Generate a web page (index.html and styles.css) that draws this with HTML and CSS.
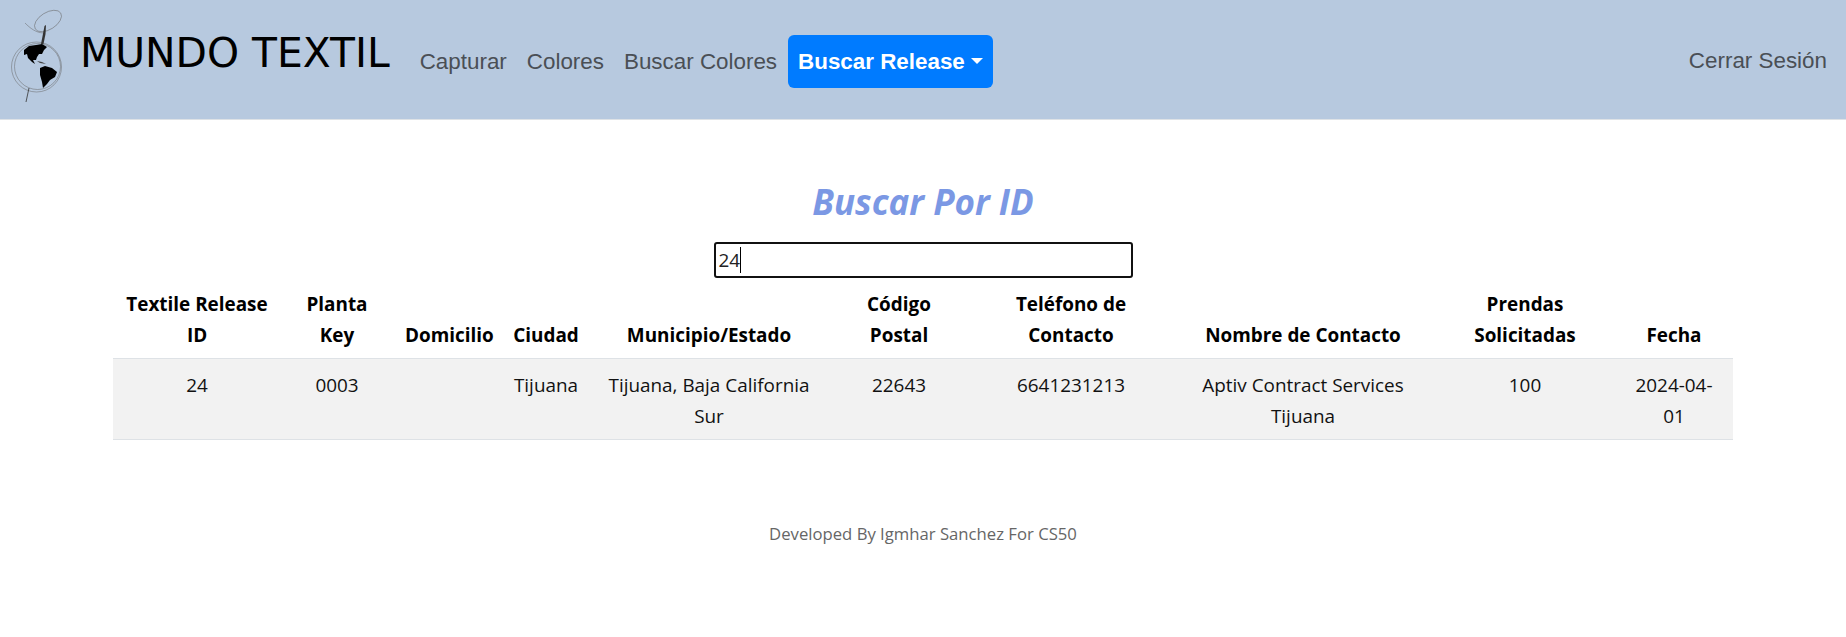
FILE: index.html
```html
<!DOCTYPE html>
<html>
<head>
  <link rel="stylesheet" href="styles.css">
  <title>Mundo Textil</title>
</head>
<body>
  <nav class="navbar">
    <a class="brand" href="#">
      <svg class="logo" viewBox="0 0 80 110" width="80" height="110">
        <g fill="none" stroke="#666" stroke-width="0.5">
          <circle cx="36.5" cy="67" r="25"/>
          <circle cx="37.5" cy="66.5" r="23"/>
          <ellipse cx="48" cy="21" rx="15" ry="8.5" transform="rotate(-32 48 21)"/>
          <path d="M25 23 C30 28 36 33 44 33"/>
        </g>
        <path d="M41 44 L44.5 26 L46 25 L45.5 34 L43.5 44 Z" fill="#333"/>
        <path d="M29 88 L26 102" fill="none" stroke="#333" stroke-width="0.8"/>
        <path d="M24 50 L29 46 L36 45 L42 44 L47 47 L44 50 L42 54 L39 54 L37 57 L36 60 L33 60 L35 64 L32 62 L28 58 L27 54 L24 55 Z" fill="#000"/>
        <path d="M40 68 L45 66 L52 68 L57 72 L55 77 L50 80 L47 84 L43 88 L42 82 L40 75 Z" fill="#000"/>
        <path d="M37 61 L42 62 L46 64 L40 63 Z" fill="#444"/>
      </svg>
      <span class="brand-name">MUNDO TEXTIL</span>
    </a>
    <ul class="nav-links">
      <li><a href="#">Capturar</a></li>
      <li><a href="#">Colores</a></li>
      <li><a href="#">Buscar Colores</a></li>
      <li class="release"><a class="active" href="#">Buscar Release<span class="caret"></span></a></li>
    </ul>
    <a class="logout" href="#">Cerrar Sesión</a>
  </nav>

  <main class="content">
    <h2 class="title">Buscar Por ID</h2>
    <div class="search">
      <div class="search-box">24<span class="cursor"></span></div>
    </div>
    <table class="results">
      <colgroup>
        <col class="c1"><col class="c2"><col class="c3"><col class="c4"><col class="c5">
        <col class="c6"><col class="c7"><col class="c8"><col class="c9"><col class="c10">
      </colgroup>
      <thead>
        <tr>
          <th>Textile Release ID</th>
          <th>Planta Key</th>
          <th>Domicilio</th>
          <th>Ciudad</th>
          <th>Municipio/Estado</th>
          <th>Código Postal</th>
          <th>Teléfono de Contacto</th>
          <th>Nombre de Contacto</th>
          <th>Prendas Solicitadas</th>
          <th>Fecha</th>
        </tr>
      </thead>
      <tbody>
        <tr>
          <td>24</td>
          <td>0003</td>
          <td></td>
          <td>Tijuana</td>
          <td>Tijuana, Baja California Sur</td>
          <td>22643</td>
          <td>6641231213</td>
          <td>Aptiv Contract Services Tijuana</td>
          <td>100</td>
          <td>2024-04-01</td>
        </tr>
      </tbody>
    </table>
  </main>

  <footer class="footer">Developed By Igmhar Sanchez For CS50</footer>
</body>
</html>
```

FILE: styles.css
```css
* {
  box-sizing: border-box;
}

body {
  margin: 0;
  background: #fff;
  color: #212529;
  font-family: 'Open Sans', 'Noto Sans', sans-serif;
  font-size: 18.9px;
}

a {
  text-decoration: none;
}

.navbar {
  display: flex;
  align-items: center;
  height: 120px;
  padding: 0 19px 0 0;
  background: #b7c9df;
  border-bottom: 1px solid #dee2e6;
}

.brand {
  display: flex;
  align-items: flex-start;
  height: 110px;
  margin-top: -9px;
  color: #000;
}

.logo {
  display: block;
  flex: none;
}

.brand-name {
  margin-top: 26px;
  font-family: 'DejaVu Sans', sans-serif;
  font-size: 40.8px;
  line-height: 54px;
}

.nav-links {
  display: flex;
  align-items: center;
  margin: 4px 0 0 20px;
  padding: 0;
  list-style: none;
  font-family: 'Liberation Sans', Arial, sans-serif;
  font-size: 22.4px;
}

.release {
  margin-left: 1px;
}

.nav-links a {
  display: block;
  padding: 8px 10px;
  color: #4a4f55;
  line-height: 37px;
}

.nav-links .active {
  border-radius: 6px;
  background: #007bff;
  color: #fff;
  font-weight: 700;
}

.caret {
  display: inline-block;
  margin-left: 6px;
  vertical-align: 5px;
  border-top: 6px solid #fff;
  border-left: 6px solid transparent;
  border-right: 6px solid transparent;
}

.logout {
  margin: 2px 0 0 auto;
  color: #4a4f55;
  font-family: 'Liberation Sans', Arial, sans-serif;
  font-size: 22.4px;
}

.content {
  padding: 0 113px;
}

.title {
  margin: 62px 0 0;
  color: #7b98e4;
  font-size: 35px;
  font-style: italic;
  font-weight: 700;
  line-height: 40px;
  text-align: center;
}

.search {
  display: flex;
  justify-content: center;
  margin-top: 20px;
}

.search-box {
  display: flex;
  align-items: center;
  width: 419px;
  height: 36px;
  padding: 0 3px;
  border: 2px solid #111;
  border-radius: 3px;
  color: #222;
}

.cursor {
  width: 1px;
  height: 26px;
  background: #000;
}

.results {
  width: 1620px;
  border-collapse: collapse;
  table-layout: fixed;
  color: #111;
  line-height: 30.6px;
  text-align: center;
}

.c1 { width: 168px; }
.c2 { width: 112px; }
.c3 { width: 108px; }
.c4 { width: 90px; }
.c5 { width: 236px; }
.c6 { width: 144px; }
.c7 { width: 200px; }
.c8 { width: 264px; }
.c9 { width: 180px; }
.c10 { width: 118px; }

.results th {
  padding: 11px 12px 8px;
  border-bottom: 1px solid #dee2e6;
  color: #000;
  font-weight: 700;
  vertical-align: bottom;
}

.results td {
  padding: 11px 12px 8px;
  border-bottom: 1px solid #dee2e6;
  background: #f2f2f2;
  vertical-align: top;
}

.footer {
  margin-top: 82px;
  color: #666;
  font-size: 16.7px;
  text-align: center;
}
```
